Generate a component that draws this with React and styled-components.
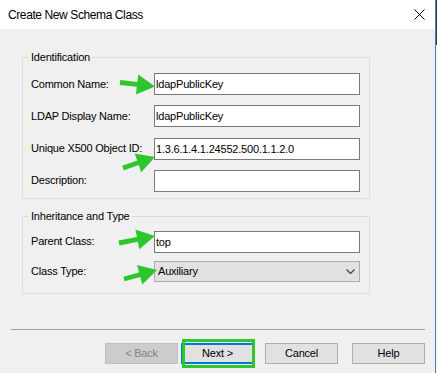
import React from "react";
import styled, { createGlobalStyle } from "styled-components";

const GlobalStyle = createGlobalStyle`
  html, body { margin: 0; padding: 0; }
  body {
    background: linear-gradient(to bottom, #3b3b3b 0, #3b3b3b 45px, #f4f4f4 45px);
    font-family: "Liberation Sans", Arial, sans-serif;
  }
  #root { width: 437px; height: 373px; }
`;

const Window = styled.div`
  position: relative;
  width: 436px;
  height: 373px;
  box-sizing: border-box;
  border-right: 1px solid #3a7fc6;
  background: #f0f0f0;
  display: flex;
  flex-direction: column;
  font-family: "Liberation Sans", Arial, sans-serif;
  font-size: 11px;
  letter-spacing: -0.2px;
  color: #000;
  overflow: hidden;
`;

const TitleBar = styled.div`
  flex: none;
  height: 29px;
  background: #fff;
  display: flex;
  align-items: center;
  justify-content: space-between;
  padding: 0 10px 0 8px;
`;

const Title = styled.span`
  font-size: 12px;
  letter-spacing: -0.4px;
  color: #000;
`;

const Content = styled.div`
  display: flex;
  flex-direction: column;
  gap: 11px;
  padding: 22px 0 0 22px;
`;

const Group = styled.fieldset`
  width: 348px;
  box-sizing: border-box;
  margin: 0;
  border: 1px solid #dcdcdc;
  padding: ${(p) => p.$pad};
  display: grid;
  grid-template-columns: 123px 206px;
  row-gap: ${(p) => p.$gap};
  align-items: center;
`;

const Legend = styled.legend`
  padding: 0 2px;
  margin-left: -2px;
  line-height: 13px;
  font-size: 11px;
`;

const Label = styled.label`
  white-space: nowrap;
  line-height: 13px;
`;

const Field = styled.input`
  box-sizing: border-box;
  width: 206px;
  height: 22px;
  margin: 0;
  padding: 0 1px;
  border: 1px solid #7a7a7a;
  background: #fff;
  font: inherit;
  letter-spacing: inherit;
  color: #000;
  outline: none;
`;

const Combo = styled.div`
  box-sizing: border-box;
  width: 206px;
  height: 21px;
  padding: 0 4px 0 3px;
  border: 1px solid #adadad;
  background: #e1e1e1;
  display: flex;
  align-items: center;
  justify-content: space-between;
`;

const Separator = styled.div`
  flex: none;
  height: 1px;
  margin: 35px 10px 0 11px;
  background: #a0a0a0;
`;

const ButtonRow = styled.div`
  display: flex;
  justify-content: flex-end;
  margin-top: 13px;
  padding-right: 10px;
`;

const Button = styled.button`
  position: relative;
  box-sizing: border-box;
  width: 73px;
  height: 21px;
  margin: 0 ${(p) => p.$gap || 0}px 0 0;
  padding: 0;
  font: inherit;
  letter-spacing: inherit;
  color: ${(p) => (p.disabled ? "#838383" : "#000")};
  background: ${(p) => (p.disabled ? "#cccccc" : "#e1e1e1")};
  border: ${(p) =>
    p.$default ? "2px solid #0078d7" : p.disabled ? "1px solid #bfbfbf" : "1px solid #adadad"};
  overflow: visible;
`;

const Highlight = styled.span`
  position: absolute;
  top: -6px;
  left: -1px;
  right: -3px;
  bottom: -6px;
  border: 3px solid #2dc72d;
  pointer-events: none;
`;

const Overlay = styled.svg`
  position: absolute;
  left: 0;
  top: 0;
  pointer-events: none;
`;

function arrowPoints(x1, y1, x2, y2) {
  const dx = x2 - x1;
  const dy = y2 - y1;
  const len = Math.hypot(dx, dy);
  const ux = dx / len;
  const uy = dy / len;
  const nx = -uy;
  const ny = ux;
  const sw = 2.4;
  const hw = 10;
  const hl = 18;
  const bx = x2 - ux * hl;
  const by = y2 - uy * hl;
  const pts = [
    [x1 + nx * sw, y1 + ny * sw],
    [bx + nx * sw, by + ny * sw],
    [bx + nx * hw, by + ny * hw],
    [x2, y2],
    [bx - nx * hw, by - ny * hw],
    [bx - nx * sw, by - ny * sw],
    [x1 - nx * sw, y1 - ny * sw],
  ];
  return pts.map((p) => p.map((v) => v.toFixed(1)).join(",")).join(" ");
}

const arrows = [
  [120, 82.5, 155, 86.5],
  [123, 168, 155, 157],
  [119, 243, 155, 236],
  [124, 279, 157, 270],
];

export default function App() {
  return (
    <>
      <GlobalStyle />
      <Window>
        <TitleBar>
          <Title>Create New Schema Class</Title>
          <svg width="11" height="11" viewBox="0 0 11 11">
            <path d="M0.5 0.5 L10.5 10.5 M10.5 0.5 L0.5 10.5" stroke="#000" strokeWidth="1" fill="none" />
          </svg>
        </TitleBar>
        <Content>
          <Group $pad="9px 9px 6px 8px" $gap="10.33px">
            <Legend>Identification</Legend>
            <Label>Common Name:</Label>
            <Field readOnly defaultValue="ldapPublicKey" />
            <Label>LDAP Display Name:</Label>
            <Field readOnly defaultValue="ldapPublicKey" />
            <Label>Unique X500 Object ID:</Label>
            <Field readOnly defaultValue="1.3.6.1.4.1.24552.500.1.1.2.0" />
            <Label>Description:</Label>
            <Field readOnly defaultValue="" />
          </Group>
          <Group $pad="8px 9px 11px 8px" $gap="8px">
            <Legend>Inheritance and Type</Legend>
            <Label>Parent Class:</Label>
            <Field readOnly defaultValue="top" />
            <Label>Class Type:</Label>
            <Combo>
              <span>Auxiliary</span>
              <svg width="9" height="5" viewBox="0 0 9 5">
                <polyline points="0.5,0.5 4.5,4.5 8.5,0.5" stroke="#404040" strokeWidth="1.2" fill="none" />
              </svg>
            </Combo>
          </Group>
        </Content>
        <Separator />
        <ButtonRow>
          <Button disabled $gap={3}>&lt; Back</Button>
          <Button $default $gap={11}>
            Next &gt;
            <Highlight />
          </Button>
          <Button $gap={14}>Cancel</Button>
          <Button>Help</Button>
        </ButtonRow>
        <Overlay width="436" height="373" viewBox="0 0 436 373">
          {arrows.map((a, i) => (
            <polygon key={i} points={arrowPoints(...a)} fill="#2dc72d" />
          ))}
        </Overlay>
      </Window>
    </>
  );
}
